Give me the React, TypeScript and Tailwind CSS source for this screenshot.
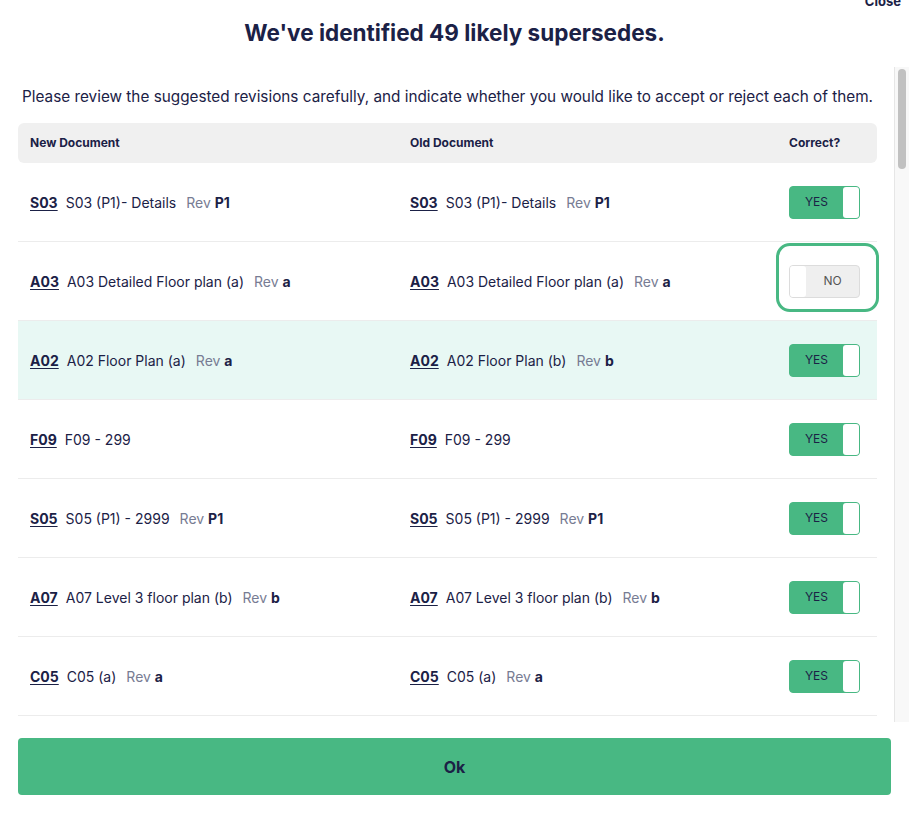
import React from "react";

type Row = {
  code: string;
  newTitle: string;
  newRev?: string;
  oldTitle: string;
  oldRev?: string;
  correct: boolean;
  highlight?: boolean;
  focus?: boolean;
};

const rows: Row[] = [
  { code: "S03", newTitle: "S03 (P1)- Details", newRev: "P1", oldTitle: "S03 (P1)- Details", oldRev: "P1", correct: true },
  { code: "A03", newTitle: "A03 Detailed Floor plan (a)", newRev: "a", oldTitle: "A03 Detailed Floor plan (a)", oldRev: "a", correct: false, focus: true },
  { code: "A02", newTitle: "A02 Floor Plan (a)", newRev: "a", oldTitle: "A02 Floor Plan (b)", oldRev: "b", correct: true, highlight: true },
  { code: "F09", newTitle: "F09 - 299", oldTitle: "F09 - 299", correct: true },
  { code: "S05", newTitle: "S05 (P1) - 2999", newRev: "P1", oldTitle: "S05 (P1) - 2999", oldRev: "P1", correct: true },
  { code: "A07", newTitle: "A07 Level 3 floor plan (b)", newRev: "b", oldTitle: "A07 Level 3 floor plan (b)", oldRev: "b", correct: true },
  { code: "C05", newTitle: "C05 (a)", newRev: "a", oldTitle: "C05 (a)", oldRev: "a", correct: true },
];

function DocCell({ code, title, rev }: { code: string; title: string; rev?: string }) {
  return (
    <div className="flex items-center gap-2 pl-3 text-[14px] text-[#1b2146]">
      <span className="font-bold underline underline-offset-2">{code}</span>
      <span>{title}</span>
      {rev && (
        <span className="ml-0.5">
          <span className="text-[#777c93]">Rev</span> <span className="font-bold">{rev}</span>
        </span>
      )}
    </div>
  );
}

function Toggle({ on }: { on: boolean }) {
  if (on) {
    return (
      <div className="flex h-[33px] w-[71px] items-stretch rounded-[4px] border border-[#48b883] bg-[#48b883]">
        <span className="flex flex-1 items-center justify-center text-[12px] text-[#1b2146]">YES</span>
        <span className="w-[16px] rounded-[3px] bg-white" />
      </div>
    );
  }
  return (
    <div className="flex h-[33px] w-[71px] items-stretch rounded-[4px] border border-[#dcdcdc] bg-[#efefef]">
      <span className="w-[16px] rounded-[3px] bg-white" />
      <span className="flex flex-1 items-center justify-center text-[12px] text-[#555]">NO</span>
    </div>
  );
}

export default function App() {
  return (
    <div
      className="relative flex h-[815px] w-[909px] flex-col overflow-hidden bg-white text-[#1b2146]"
      style={{ fontFamily: "Inter, 'Noto Sans', sans-serif" }}
    >
      <span className="absolute right-[8px] top-[-8px] text-[13px] font-bold text-[#1b2146]">Close</span>

      <div className="flex h-[67px] shrink-0 items-center justify-center pb-[2px]">
        <h1 className="text-[22.5px] font-bold">We've identified 49 likely supersedes.</h1>
      </div>

      <div className="flex h-[655px] shrink-0">
        <div className="min-w-0 flex-1 overflow-hidden pl-[18px] pr-[17px]">
          <p className="pt-[18px] pb-[14px] text-center text-[15.3px] leading-6">
            Please review the suggested revisions carefully, and indicate whether you would like to accept or reject each of them.
          </p>

          <div className="grid h-[40px] grid-cols-[380px_379px_1fr] items-center rounded-[6px] bg-[#f0f0f0] text-[12px] font-bold">
            <span className="pl-3">New Document</span>
            <span className="pl-3">Old Document</span>
            <span className="pl-3">Correct?</span>
          </div>

          {rows.map((r, i) => (
            <div
              key={i}
              className={`grid h-[79px] grid-cols-[380px_379px_1fr] items-center border-b border-[#ececec] ${r.highlight ? "bg-[#e8f8f4]" : ""}`}
            >
              <DocCell code={r.code} title={r.newTitle} rev={r.newRev} />
              <DocCell code={r.code} title={r.oldTitle} rev={r.oldRev} />
              <div className="pl-3">
                <div className="relative w-[71px]">
                  <Toggle on={r.correct} />
                  {r.focus && (
                    <span className="pointer-events-none absolute -left-[13px] -right-[19px] -top-[22px] -bottom-[14px] rounded-[14px] border-[3px] border-[#48b883]" />
                  )}
                </div>
              </div>
            </div>
          ))}
        </div>

        {/* scrollbar */}
        <div className="w-[15px] shrink-0 border-l border-[#e6e6e6] bg-[#f8f8f8] px-[3px] pt-[2px]">
          <div className="h-[100px] rounded-full bg-[#c1c1c1]" />
        </div>
      </div>

      <div className="px-[18px] pt-[16px]">
        <button className="flex h-[57px] w-full items-center justify-center rounded-[4px] bg-[#48b883] text-[16px] font-bold text-[#1b2146]">
          Ok
        </button>
      </div>
    </div>
  );
}
